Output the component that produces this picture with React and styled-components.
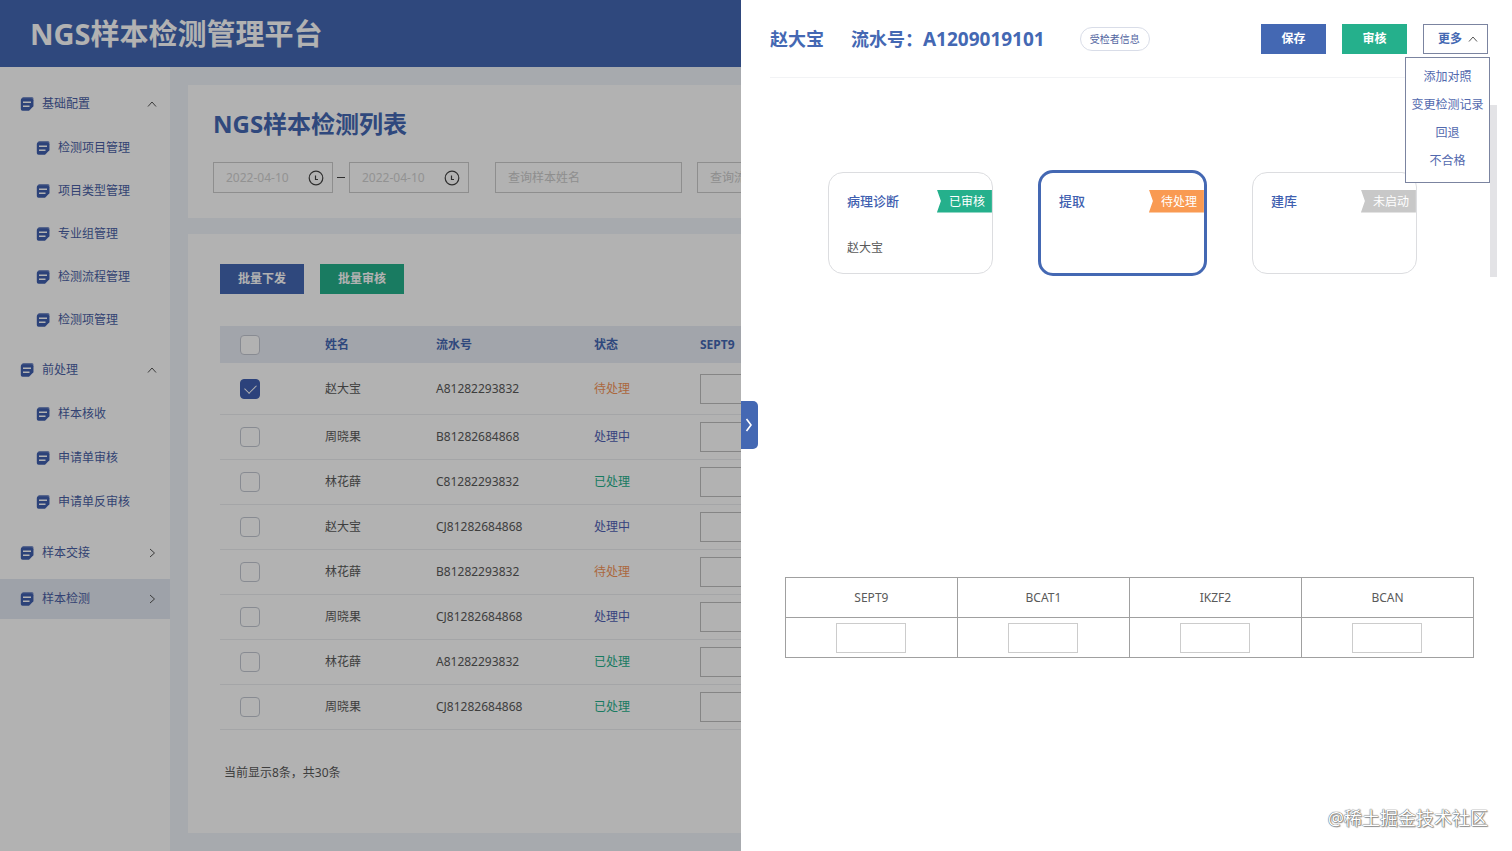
import { useState } from 'react';
import styled, { createGlobalStyle, css } from 'styled-components';

const colors = {
  primary: '#4468b3',
  primaryText: '#3f5fb0',
  green: '#25b08c',
  orange: '#f99a52',
  grey: '#c8c8c8',
  line: '#ebecef',
  text: '#5a5a5a',
  page: '#f0f4fa',
};

const GlobalStyle = createGlobalStyle`
  * { box-sizing: border-box; }
  body {
    margin: 0;
    color: ${colors.text};
    font-family: 'Noto Sans', 'Noto Sans CJK SC', sans-serif;
    font-size: 12px;
    line-height: 16px;
  }
  button, input { font: inherit; }
`;

const menu = [
  {
    title: '基础配置',
    children: ['检测项目管理', '项目类型管理', '专业组管理', '检测流程管理', '检测项管理'],
    rowHeight: 43,
  },
  { title: '前处理', children: ['样本核收', '申请单审核', '申请单反审核'], rowHeight: 44 },
  { title: '样本交接' },
  { title: '样本检测', active: true },
];

const statusMap = {
  pending: { label: '待处理', color: '#f5955a' },
  running: { label: '处理中', color: '#4f60b5' },
  done: { label: '已处理', color: colors.green },
};

const samples = [
  { id: 1, name: '赵大宝', serial: 'A81282293832', status: 'pending' },
  { id: 2, name: '周晓果', serial: 'B81282684868', status: 'running' },
  { id: 3, name: '林花薛', serial: 'C81282293832', status: 'done' },
  { id: 4, name: '赵大宝', serial: 'CJ81282684868', status: 'running' },
  { id: 5, name: '林花薛', serial: 'B81282293832', status: 'pending' },
  { id: 6, name: '周晓果', serial: 'CJ81282684868', status: 'running' },
  { id: 7, name: '林花薛', serial: 'A81282293832', status: 'done' },
  { id: 8, name: '周晓果', serial: 'CJ81282684868', status: 'done' },
];

const steps = [
  { title: '病理诊断', tag: '已审核', color: colors.green, operator: '赵大宝' },
  { title: '提取', tag: '待处理', color: colors.orange, active: true },
  { title: '建库', tag: '未启动', color: colors.grey },
];

const genes = ['SEPT9', 'BCAT1', 'IKZF2', 'BCAN'];
const moreActions = ['添加对照', '变更检测记录', '回退', '不合格'];

const DocIcon = () => (
  <svg width="14" height="14" viewBox="0 0 14 14" aria-hidden="true">
    <path d="M3.500 0H12q1.500 0 1.500 1.500V9L12 10V2H1.500Q2 0 3.500 0z" fill="#7d92c8" />
    <path d="M2.500 1.200H11q2.200 0 2.200 2v6.300L9 13.800H2.500Q.8 13.800.8 12V3Q.8 1.200 2.500 1.200z" fill="#3f5fae" />
    <path d="M3 5.300h8M3 9.300h6.500" stroke="#fff" strokeWidth="1.500" />
  </svg>
);

const Chevron = ({ dir }) => (
  <svg width="10" height="10" viewBox="0 0 10 10" fill="none" stroke="#555" aria-hidden="true">
    <path d={dir === 'up' ? 'M1 7.500 5 3l4 4.500' : 'M3 1l4.500 4L3 9'} />
  </svg>
);

const HandleArrow = () => (
  <svg width="8" height="14" viewBox="0 0 8 14" fill="none" stroke="#fff" strokeWidth="1.600" aria-hidden="true">
    <path d="M1.500 1 6 7l-4.500 6" />
  </svg>
);

const ClockIcon = () => (
  <svg width="16" height="16" viewBox="0 0 16 16" fill="none" stroke="#444" aria-hidden="true">
    <circle cx="8" cy="8" r="6.800" strokeWidth="1.200" />
    <path d="M7.500 5.500v4H10" strokeWidth="1.200" />
  </svg>
);

function App() {
  const [checked, setChecked] = useState([1]);
  const [moreOpen, setMoreOpen] = useState(true);

  const toggle = (id) => {
    setChecked((prev) => (prev.includes(id) ? prev.filter((x) => x !== id) : [...prev, id]));
  };

  const toggleAll = () => {
    setChecked(checked.length === samples.length ? [] : samples.map((s) => s.id));
  };

  return (
    <>
      <GlobalStyle />
      <Page>
        <TopBar>
          <Brand>NGS样本检测管理平台</Brand>
        </TopBar>
        <Body>
          <Sidebar>
            {menu.map((group) => (
              <div key={group.title}>
                <MenuHead href="#" $active={group.active}>
                  <DocIcon />
                  <MenuText>{group.title}</MenuText>
                  <Chevron dir={group.children ? 'up' : 'right'} />
                </MenuHead>
                {group.children && (
                  <SubMenu>
                    {group.children.map((item) => (
                      <SubItem key={item} href="#" $height={group.rowHeight}>
                        <DocIcon />
                        {item}
                      </SubItem>
                    ))}
                  </SubMenu>
                )}
              </div>
            ))}
          </Sidebar>
          <Main>
            <SearchPanel>
              <PageTitle>NGS样本检测列表</PageTitle>
              <Filters>
                <DateField>
                  <input aria-label="开始日期" placeholder="2022-04-10" />
                  <ClockIcon />
                </DateField>
                <Dash />
                <DateField>
                  <input aria-label="结束日期" placeholder="2022-04-10" />
                  <ClockIcon />
                </DateField>
                <SearchInput $first aria-label="样本姓名" placeholder="查询样本姓名" />
                <SearchInput aria-label="流水号" placeholder="查询流水号" />
              </Filters>
            </SearchPanel>
            <ListPanel>
              <BatchBar>
                <BatchButton $color={colors.primary}>批量下发</BatchButton>
                <BatchButton $color={colors.green}>批量审核</BatchButton>
              </BatchBar>
              <SampleTable>
                <colgroup>
                  <CheckCol />
                  <NameCol />
                  <SerialCol />
                  <StatusCol />
                  <col />
                </colgroup>
                <thead>
                  <tr>
                    <th>
                      <CheckBox
                        type="checkbox"
                        aria-label="全选"
                        checked={checked.length === samples.length}
                        onChange={toggleAll}
                      />
                    </th>
                    <th>姓名</th>
                    <th>流水号</th>
                    <th>状态</th>
                    <th>SEPT9</th>
                  </tr>
                </thead>
                <tbody>
                  {samples.map((s) => (
                    <tr key={s.id}>
                      <td>
                        <CheckBox
                          type="checkbox"
                          aria-label={s.name}
                          checked={checked.includes(s.id)}
                          onChange={() => toggle(s.id)}
                        />
                      </td>
                      <td>{s.name}</td>
                      <td>{s.serial}</td>
                      <td>
                        <Status $color={statusMap[s.status].color}>{statusMap[s.status].label}</Status>
                      </td>
                      <td>
                        <ValueInput aria-label="SEPT9" />
                      </td>
                    </tr>
                  ))}
                </tbody>
              </SampleTable>
              <Summary>当前显示8条，共30条</Summary>
            </ListPanel>
          </Main>
        </Body>
      </Page>

      <Mask />

      <Drawer>
        <DrawerHandle aria-label="收起">
          <HandleArrow />
        </DrawerHandle>
        <DrawerHeader>
          <Patient>赵大宝</Patient>
          <Serial>
            流水号：<SerialNo>A1209019101</SerialNo>
          </Serial>
          <InfoButton>受检者信息</InfoButton>
          <Actions>
            <ActionButton $color={colors.primary}>保存</ActionButton>
            <ActionButton $color={colors.green}>审核</ActionButton>
            <MoreWrap>
              <MoreButton aria-expanded={moreOpen} onClick={() => setMoreOpen(!moreOpen)}>
                更多
                <Chevron dir="up" />
              </MoreButton>
              {moreOpen && (
                <MoreMenu>
                  {moreActions.map((label) => (
                    <MoreItem key={label}>{label}</MoreItem>
                  ))}
                </MoreMenu>
              )}
            </MoreWrap>
          </Actions>
        </DrawerHeader>
        <DrawerBody>
          <DrawerContent>
            <Steps>
              {steps.map((step) => (
                <StepCard key={step.title} $active={step.active}>
                  <StepHead>
                    <StepTitle>{step.title}</StepTitle>
                    <Ribbon $color={step.color}>{step.tag}</Ribbon>
                  </StepHead>
                  {step.operator}
                </StepCard>
              ))}
            </Steps>
            <GeneTable>
              <thead>
                <tr>
                  {genes.map((gene) => (
                    <th key={gene}>{gene}</th>
                  ))}
                </tr>
              </thead>
              <tbody>
                <tr>
                  {genes.map((gene) => (
                    <td key={gene}>
                      <ValueInput $light aria-label={gene} />
                    </td>
                  ))}
                </tr>
              </tbody>
            </GeneTable>
          </DrawerContent>
          <ScrollThumb />
        </DrawerBody>
        <Watermark>@稀土掘金技术社区</Watermark>
      </Drawer>
    </>
  );
}
export default App;

const Page = styled.div`
  display: flex;
  flex-direction: column;
  min-height: 100vh;
  background: ${colors.page};
`;

const TopBar = styled.header`
  display: flex;
  align-items: center;
  height: 67px;
  padding: 0 30px;
  background: ${colors.primary};
`;

const Brand = styled.h1`
  margin: 0;
  font-size: 29px;
  line-height: 40px;
  font-weight: 700;
  color: #fff;
`;

const Body = styled.div`
  display: flex;
  flex: 1;
`;

const Sidebar = styled.nav`
  display: flex;
  flex-direction: column;
  gap: 6px;
  width: 170px;
  flex-shrink: 0;
  padding-top: 17px;
  background: #fff;
`;

const menuLink = css`
  display: flex;
  align-items: center;
  gap: 8px;
  color: #4a5fa5;
  text-decoration: none;
`;

const MenuHead = styled.a`
  ${menuLink}
  height: 40px;
  padding: 0 13px 0 20px;
  background: ${({ $active }) => ($active ? '#e3e8f2' : 'transparent')};
`;

const MenuText = styled.span`
  flex: 1;
`;

const SubMenu = styled.div`
  padding: 2px 0 3px;
`;

const SubItem = styled.a`
  ${menuLink}
  height: ${({ $height }) => $height}px;
  padding-left: 36px;
`;

const Main = styled.main`
  display: flex;
  flex-direction: column;
  flex: 1;
  min-width: 0;
  gap: 16px;
  padding: 18px 18px;
`;

const SearchPanel = styled.section`
  padding: 23px 25px 25px;
  background: #fff;
`;

const PageTitle = styled.h2`
  margin: 0 0 22px;
  font-size: 24px;
  line-height: 32px;
  font-weight: 700;
  color: ${colors.primary};
`;

const Filters = styled.div`
  display: flex;
  align-items: center;
`;

const DateField = styled.label`
  display: flex;
  align-items: center;
  justify-content: space-between;
  width: 120px;
  height: 31px;
  padding: 0 8px 0 12px;
  border: 1px solid #ccc;

  input {
    width: 76px;
    padding: 0;
    border: 0;
    outline: 0;
    background: transparent;
  }
  input::placeholder {
    color: #d2d2d2;
  }
`;

const Dash = styled.span`
  width: 8px;
  height: 1px;
  margin: 0 4px;
  background: #444;
`;

const SearchInput = styled.input`
  width: 187px;
  height: 31px;
  margin-left: ${({ $first }) => ($first ? 26 : 15)}px;
  padding: 0 12px;
  border: 1px solid #ccc;
  outline: 0;

  &::placeholder {
    color: #ccc;
  }
`;

const ListPanel = styled.section`
  flex: 1;
  padding: 30px 32px 0;
  background: #fff;
`;

const BatchBar = styled.div`
  display: flex;
  gap: 16px;
  margin-bottom: 32px;
`;

const BatchButton = styled.button`
  width: 84px;
  height: 30px;
  padding: 0;
  border: 0;
  font-weight: 700;
  color: #fff;
  background: ${({ $color }) => $color};
`;

const SampleTable = styled.table`
  width: 100%;
  table-layout: fixed;
  border-spacing: 0;

  th,
  td {
    padding: 0;
    text-align: left;
  }
  th {
    height: 37px;
    font-weight: 700;
    color: ${colors.primary};
    background: #e9edf5;
  }
  td {
    height: 45px;
    border-bottom: 1px solid ${colors.line};
  }
  tbody tr:first-child td {
    height: 52px;
  }
  th:first-child,
  td:first-child {
    padding-left: 20px;
  }
`;

const CheckCol = styled.col`
  width: 105px;
`;

const NameCol = styled.col`
  width: 111px;
`;

const SerialCol = styled.col`
  width: 158px;
`;

const StatusCol = styled.col`
  width: 106px;
`;

const CheckBox = styled.input`
  appearance: none;
  display: grid;
  place-items: center;
  width: 20px;
  height: 20px;
  margin: 0;
  border: 1px solid #c3c8d2;
  border-radius: 4px;
  background: #fff;

  &:checked {
    border-color: ${colors.primaryText};
    background: ${colors.primaryText};
  }
  &:checked::after {
    content: '';
    width: 6px;
    height: 10px;
    margin-bottom: 3px;
    border: solid #fff;
    border-width: 0 1px 1px 0;
    transform: rotate(45deg);
  }
`;

const Status = styled.span`
  color: ${({ $color }) => $color};
`;

const ValueInput = styled.input`
  display: block;
  width: 70px;
  height: 30px;
  padding: 0 8px;
  border: 1px solid ${({ $light }) => ($light ? '#ccc' : '#bfbfbf')};
  outline: 0;
  background: transparent;
`;

const Summary = styled.p`
  margin: 35px 4px 0;
`;

const Mask = styled.div`
  position: fixed;
  inset: 0;
  background: rgba(0, 0, 0, 0.3);
`;

const Drawer = styled.aside`
  position: fixed;
  top: 0;
  right: 0;
  bottom: 0;
  display: flex;
  flex-direction: column;
  width: 51%;
  background: #fff;
`;

const DrawerHandle = styled.button`
  position: absolute;
  top: calc(50% - 25px);
  left: 0;
  display: flex;
  align-items: center;
  justify-content: center;
  width: 17px;
  height: 48px;
  padding: 0;
  border: 0;
  border-radius: 0 5px 5px 0;
  background: ${colors.primary};
`;

const DrawerHeader = styled.header`
  display: flex;
  align-items: center;
  height: 78px;
  margin: 0 24px 0 29px;
  border-bottom: 1px solid #f2f3f5;
`;

const Patient = styled.h2`
  margin: 0 27px 0 0;
  font-size: 18px;
  line-height: 24px;
  color: ${colors.primary};
`;

const Serial = styled.span`
  font-size: 18px;
  line-height: 24px;
  font-weight: 700;
  color: ${colors.primary};
`;

const SerialNo = styled.span`
  font-size: 19px;
`;

const InfoButton = styled.button`
  height: 24px;
  margin-left: 35px;
  padding: 0 9px;
  border: 1px solid #d9dde8;
  border-radius: 12px;
  font-size: 10px;
  color: #52659f;
  background: #fff;
`;

const Actions = styled.div`
  display: flex;
  gap: 16px;
  margin-left: auto;
`;

const ActionButton = styled.button`
  width: 65px;
  height: 30px;
  padding: 0;
  border: 0;
  font-weight: 700;
  color: #fff;
  background: ${({ $color }) => $color};
`;

const MoreWrap = styled.div`
  position: relative;
`;

const MoreButton = styled(ActionButton)`
  display: flex;
  align-items: center;
  justify-content: flex-end;
  gap: 6px;
  padding-right: 9px;
  border: 1px solid #7b84a0;
  color: ${colors.primary};
  background: #fff;
`;

const MoreMenu = styled.div`
  position: absolute;
  top: 33px;
  right: -2px;
  z-index: 1;
  display: flex;
  flex-direction: column;
  width: 85px;
  padding: 5px 0 7px;
  border: 1px solid #7b84a0;
  background: #fff;
`;

const MoreItem = styled.button`
  height: 28px;
  padding: 0;
  border: 0;
  color: #5269ae;
  background: transparent;
  white-space: nowrap;
`;

const DrawerBody = styled.div`
  display: flex;
  flex: 1;
  padding-right: 15px;
`;

const DrawerContent = styled.div`
  flex: 1;
  padding: 92px 16px 0 44px;
`;

const Steps = styled.div`
  display: flex;
  align-items: center;
  gap: 45px;
  padding-left: 43px;
  margin-bottom: 301px;
`;

const StepCard = styled.article`
  width: ${({ $active }) => ($active ? 169 : 165)}px;
  height: ${({ $active }) => ($active ? 106 : 102)}px;
  padding: 16px 0 0 18px;
  border: ${({ $active }) => ($active ? `3px solid ${colors.primary}` : '1px solid #dcdde0')};
  border-radius: 15px;
`;

const StepHead = styled.div`
  display: flex;
  align-items: center;
  justify-content: space-between;
  margin-bottom: 27px;
`;

const StepTitle = styled.h3`
  margin: 0;
  font-size: 13px;
  line-height: 24px;
  font-weight: 500;
  color: ${colors.primaryText};
`;

const Ribbon = styled.span`
  width: 55px;
  padding-left: 12px;
  line-height: 23px;
  color: #fff;
  background: ${({ $color }) => $color};
  clip-path: polygon(0 0, 100% 0, 100% 100%, 0 100%, 4px 50%);
`;

const GeneTable = styled.table`
  width: 100%;
  table-layout: fixed;
  border-collapse: collapse;

  th,
  td {
    height: 40px;
    padding: 0;
    border: 1px solid #a0a0a0;
    font-weight: 400;
    text-align: center;
  }
  input {
    margin: 0 auto;
  }
`;

const ScrollThumb = styled.div`
  width: 7px;
  height: 172px;
  margin-top: 27px;
  background: #e3e3e6;
`;

const Watermark = styled.div`
  position: absolute;
  right: 24px;
  bottom: 20px;
  font-size: 18px;
  line-height: 26px;
  color: #fff;
  text-shadow: 0 0 1px #555, 0 0 1px #555, 1px 1px 1px #999;
`;
